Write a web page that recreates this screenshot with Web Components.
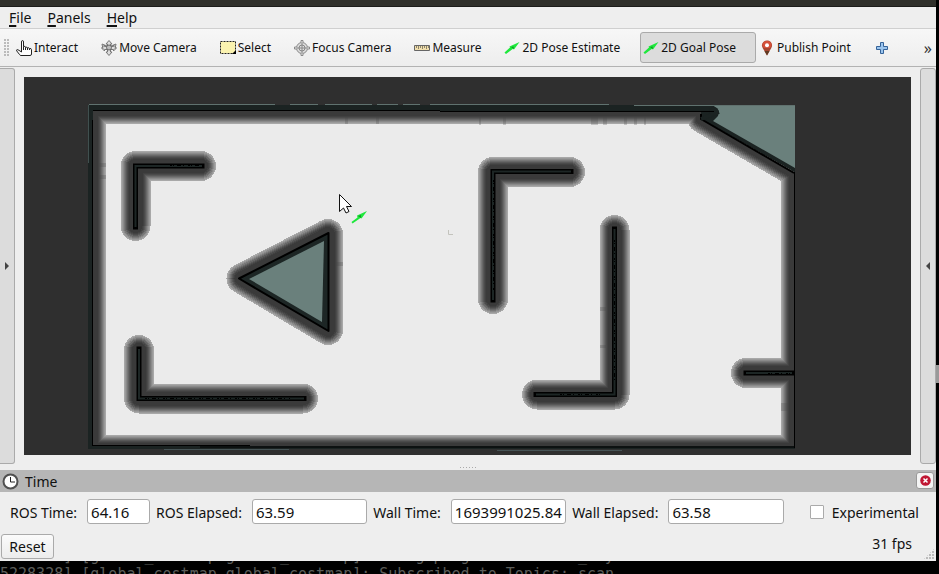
<!DOCTYPE html>
<html lang="en">
<head>
<meta charset="utf-8">
<title>RViz</title>
<style>
html, body { margin: 0; height: 100%; background: #000; overflow: hidden; }
</style>
</head>
<body>
<rviz-app></rviz-app>
<script>
const define = (name, html, setup) => customElements.define(name, class extends HTMLElement {
  constructor() {
    super();
    const t = document.createElement('template');
    t.innerHTML = html;
    this.attachShadow({ mode: 'open' }).append(t.content.cloneNode(true));
  }
  connectedCallback() { if (setup && !this.ready) { this.ready = true; setup.call(this, this.shadowRoot); } }
});

const icons = {
  hand: '<path d="M5.500 10V2q0-1.500 1-1.500t1 1.500v4.500q1.800-.8 2 .8 1.800-.6 2 .6 1.800-.5 2 .6 2-.3 2 1.200v4.300q0 1.500-1.500 1.500H5q-1 0-1.500-1L.8 11q-.6-1.500.7-1.500L4 11l1.500 1z" fill="#fff" stroke="#222"/><path d="M7.500 6.500V10M9.500 7.300V10M11.500 8v2M13.500 8.500V10" stroke="#222"/>',
  move: '<path d="M8 .5 11 4H9.500v2.500h3V5L15.500 8l-3 3V9.500h-3V12H11L8 15.500 5 12h1.500V9.500h-3V11L.5 8l3-3v1.500h3V4H5z" fill="#ddd" stroke="#777"/><path d="m1 4 5 2M15 4l-5 2M1 4l1 5M15 4l-1 5" stroke="#777" fill="none"/><circle cx="8" cy="7.500" r="2.500" fill="#bbb" stroke="#666"/>',
  select: '<path d="M.5 1.500h15v12H.5z" fill="#fbf3b0" stroke="#222" stroke-dasharray="2 1"/><path d="M16 10v4h-4z"/>',
  focus: '<g fill="none" stroke="#888"><circle cx="8" cy="8" r="5.500" fill="#ddd"/><circle cx="8" cy="8" r="3"/><path d="M8 3v10M3 8h10"/><path d="M7 2.500V.5h2v2M7 13.500v2h2v-2M2.500 7h-2v2h2M13.500 7h2v2h-2" fill="#eee"/></g>',
  measure: '<path d="M.5 5.500h15v5H.5z" fill="#f1dfad" stroke="#666"/><path d="M2.500 6v2M4.500 6v3M6.500 6v2M8.500 6v3M10.500 6v2M12.500 6v3M14.500 6v2" stroke="#8b836b"/>',
  arrow: '<path d="M.5 12.500 6 7.500 5.500 6.500 15.500 2 10 9.500 9 8.700 2 14z" fill="#1ee83c"/><path d="m7 7 2.500-.5L10 9.300z" fill="#0c9e22"/>',
  pin: '<path d="M8 15.500 3.700 8C1.500 4 4.500.5 8 .5S14.500 4 12.300 8z" fill="#a64530"/><path d="M3.500 6C3 3 5 1 8 1s5 2 4.500 5L11 8H5z" fill="#d4503a"/><path d="M5.500 11 8 15.500 10.500 11z" fill="#5f3a22"/><circle cx="8" cy="5.200" r="2" fill="#fff"/>',
  plus: '<path d="M6.500 2.500h3v4h4v3h-4v4h-3v-4h-4v-3h4z" fill="#9bc5ee" stroke="#356399" stroke-linejoin="round"/>'
};

define('tool-button', `<style>
  :host { display: block; flex: none; }
  button { display: flex; align-items: center; gap: 2px; width: 100%; height: 31px; padding: 1px 19px 0 2px; border: 1px solid transparent; border-radius: 3px; background: none; font: inherit; color: inherit; white-space: nowrap; }
  :host([active]) button { background: #dcdcdc; border-color: #aaa; }
  svg { width: 16px; height: 16px; flex: none; }
  </style><button type="button"><svg viewBox="0 0 16 16"></svg><slot></slot></button>`,
  function (r) {
    r.querySelector('svg').innerHTML = icons[this.getAttribute('icon')];
    const b = r.querySelector('button');
    b.setAttribute('aria-pressed', this.hasAttribute('active'));
    if (this.title) b.setAttribute('aria-label', this.title);
  });

define('menu-item', `<style>
  :host { display: block; }
  button { font: inherit; color: inherit; border: 0; background: none; padding: 0; display: block; }
  ::slotted(u) { text-decoration-thickness: 2px; text-underline-offset: 2px; }
  </style><button type="button"><slot></slot></button>`);

define('menu-bar', `<style>
  :host { display: flex; align-items: center; gap: 16px; height: 21px; padding-left: 9px; border-bottom: 1px solid #cfcfcf; font-size: 14px; line-height: 20px; }
  </style><slot></slot>`);

define('tool-bar', `<style>
  :host { display: flex; align-items: center; height: 37px; padding: 0 4px; background: linear-gradient(#f7f7f7, #ededed); border-bottom: 1px solid #b2b2b2; font-size: 12px; }
  .grip { width: 5px; height: 17px; margin-right: 4px; background: radial-gradient(circle at 1px 1px, #bbb 1px, transparent 1px) 0 0 / 3px 3px; }
  .more { margin-left: auto; border: 0; background: none; padding: 0; font: inherit; color: #333; font-size: 16px; line-height: 20px; }
  </style><span class="grip"></span><slot></slot><button class="more" type="button" aria-label="More tools">»</button>`);

define('dock-handle', `<style>
  :host { display: flex; flex: none; }
  button { width: 15px; padding: 0; border: 1px solid #aaa; border-radius: 0 3px 3px 0; border-left: 0; background: #dcdcdc; display: grid; place-items: center; }
  :host([side=right]) button { width: 16px; border: 1px solid #aaa; border-radius: 3px; }
  :host([side=right]) svg { transform: scaleX(-1); }
  svg { width: 4px; height: 8px; }
  </style><button type="button" aria-label="Toggle dock"><svg viewBox="0 0 4 8"><path d="M0 0 4 4 0 8z" fill="#444"/></svg></button>`);

define('map-view', `<style>
  :host { display: block; flex: 1; min-width: 0; background: #2f2f2f; }
  svg { display: block; width: 100%; height: 100%; }
  </style><svg viewBox="24 77 887 378" role="img" aria-label="Costmap">
  <defs>
    <clipPath id="room"><path d="M93 111H701V119L794 172V446H93z"/></clipPath>
  </defs>
  <path d="M88 105H795V449H88z" fill="#1b2322"/>
  <path d="M708 106H795V168L713 121 718 116 719 111 714 106z" fill="#6a807c"/>
  <g clip-path="url(#room)">
    <path d="M93 111H795V446H93z" fill="#ebebeb"/>
    <g id="halo" fill="none" stroke-linejoin="round" stroke-linecap="round" shape-rendering="crispEdges"></g>
  </g>
  <g fill="none" stroke="#000">
    <path d="M92.500 120V446" stroke-width="1"/>
    <path d="M93 110.500H440M440 111.500H714" stroke-width="1"/>
    <path d="M701 114v5l93 54" stroke-width="2"/>
    <path d="M794.500 172V448" stroke-width="1"/>
    <path d="M92 445.500H250M200 447H795" stroke-width="1"/>
  </g>
  <path d="M89 104.500H275M290 104.500H318M325 104.500H372M377 104.500H398M403 104.500H420M430 104.500H609M634 105.500H795" stroke="#60726f"/>
  <path d="M88.500 105V163" stroke="#40504f"/><path d="M164 449.500H289M497 450.500H622" stroke="#465355"/>
  <path d="M701 119 719 112" stroke="#1b2322" stroke-width="4"/>
  <circle cx="714" cy="111.500" r="4.500" fill="#1b2322"/>
  <path d="M690 111.500H714" stroke="#000"/>
  <g fill="none" stroke-linejoin="miter">
    <g stroke="#000" stroke-width="5" stroke-linecap="square">
      <path d="M135.500 227V166H202M493 300V171.500H571M614.500 229V394.500H536M139 349V398.500H304M746 373H792"/>
    </g>
    <path d="M135.500 227V166H202M493 300V171.500H571M614.500 229V394.500H536M139 349V398.500H304M746 373H792" stroke="#1d2625" stroke-width="2"/>
    <g stroke="#000" stroke-dasharray="2 1 1 3 4 2 1 4">
      <path d="M170 165.500H200M493.500 180V290M614.500 240V380M560 394.500H600M145 398.500H290M768 373.500H792"/>
    </g>
  </g>
  <path d="M239 278.500 328.500 233V331z" fill="#1d2625" stroke="#000" stroke-width="2" stroke-linejoin="round"/>
  <path d="m249 279 75-38-2 81z" fill="#6a807c"/>
  <path d="M328.500 236V328" stroke="#000" stroke-dasharray="2 1 3 1"/>
  <g fill="#444" opacity=".25"><path d="M99 163h7v4h-7zM99 175h7v4h-7zM345 117h3v7h-3zM376 117h3v7h-3zM479 116h2v9h-2zM503 116h3v9h-3zM591 116h7v9h-7zM603 117h4v8h-4zM624 117h3v8h-3zM634 117h3v8h-3zM644 117h2v8h-2zM781 403h7v8h-7zM336 262h7v4h-7zM600 307h6v4h-6zM600 345h6v3h-6z"/></g>
  <path d="M448.500 230v4.500h4.500" stroke="#c3c3bd" fill="none"/>
  <path d="m351.500 222 6-4.500-.5-2 10-4.500-5.500 7.500-1-.5-8 5.500z" fill="#1ee83c"/><path d="m358 216 3-1v3z" fill="#0c9e22"/>
  <path d="M339.500 194.500V211.500L343.500 208 346 213 349 211.500 346.500 206.500H351.500z" fill="#fff" stroke="#111"/>
  </svg>`,
  function (r) {
    const obstacles = 'M135.500 226V166H201M493 299V172H570M614.500 230V394.500H537M139 350V398.500H303M746 373H794M241.500 278.500 328 234V330z';
    const walls = 'M92 110.500H701V119L794 173V448H92z';
    const shades = ['#a8a8a8', '#9a9a9a', '#8a8a8a', '#787878', '#686868', '#585858', '#4b4b4b', '#414141', '#3a3a3a'];
    r.getElementById('halo').innerHTML = shades.map((c, i) =>
      `<path d="${obstacles}" stroke="${c}" stroke-width="${30 - i * 2}"/><path d="${walls}" stroke="${c}" stroke-width="${27 - i * 2}"/>`).join('');
  });

define('time-field', `<style>
  :host { display: flex; align-items: center; gap: 10px; flex: 1 1 auto; }
  :host([compact]) { flex: none; }
  :host([compact]) input { flex: none; width: 63px; }
  label { white-space: nowrap; padding-top: 2px; }
  input { flex: 1 1 80px; min-width: 0; width: 80px; height: 25px; box-sizing: border-box; border: 1px solid #aaa; border-radius: 3px; padding: 0 0 0 3px; background: #fff; font: inherit; font-size: 15px; color: #111; }
  </style><label for="v"><slot></slot></label><input id="v" type="text" readonly>`,
  function (r) { r.querySelector('input').value = this.getAttribute('value'); });

define('time-panel', `<style>
  :host { display: block; position: relative; }
  header { display: flex; align-items: center; height: 22px; padding: 0 2px; gap: 6px; background: #b6b6b6; }
  header svg { width: 17px; height: 17px; }
  h2 { margin: 0; padding-top: 2px; font: inherit; flex: 1; }
  .close { width: 18px; height: 17px; padding: 0; border: 1px solid #999; border-radius: 3px; background: #f4f4f4; display: grid; place-items: center; margin-bottom: 2px; }
  .close svg { width: 11px; height: 11px; }
  .fields { display: flex; align-items: center; gap: 6px; padding: 7px 17px 0 10px; height: 25px; }
  .check { display: flex; align-items: center; gap: 8px; padding-left: 20px; }
  .check label { padding-top: 2px; }
  .check input { appearance: none; width: 14px; height: 14px; margin: 0; border: 1px solid #aaa; border-radius: 1px; background: #fff; }
  footer { display: flex; justify-content: space-between; padding: 10px 24px 2px 1px; }
  .reset { width: 53px; height: 25px; padding: 1px 0 0; border: 1px solid #aaa; border-radius: 3px; background: linear-gradient(#fbfbfb, #ececec); font: inherit; color: inherit; }
  output { line-height: 20px; }
  .size { position: absolute; right: 1px; bottom: 1px; width: 12px; height: 12px; background: radial-gradient(circle at 1px 1px, #bbb 1px, transparent 1px) 0 0 / 3px 3px; clip-path: polygon(100% 0, 100% 100%, 0 100%); }
  </style>
  <header><svg viewBox="0 0 17 17"><circle cx="8.500" cy="8.500" r="7" fill="#fff" stroke="#505050" stroke-width="2"/><path d="M8.500 4v5H13" fill="none" stroke="#222"/></svg><h2>Time</h2>
  <button class="close" type="button" aria-label="Close panel"><svg viewBox="0 0 11 11"><circle cx="5.500" cy="5.500" r="5.300" fill="#c01733"/><path d="m3.500 3.500 4 4m0-4-4 4" stroke="#fff" stroke-width="1.500"/></svg></button></header>
  <div class="fields">
    <time-field compact value="64.16">ROS Time:</time-field>
    <time-field value="63.59">ROS Elapsed:</time-field>
    <time-field value="1693991025.84">Wall Time:</time-field>
    <time-field value="63.58">Wall Elapsed:</time-field>
    <span class="check"><input id="exp" type="checkbox"><label for="exp">Experimental</label></span>
  </div>
  <footer><button class="reset" type="button">Reset</button><output>31 fps</output></footer><span class="size"></span>`);

define('terminal-strip', `<style>
  :host { display: flex; flex-direction: column; justify-content: flex-end; flex: none; height: 13px; overflow: hidden; background: #000; color: #5c5d5a; font: 15px/18px "DejaVu Sans Mono", monospace; }
  div { white-space: pre; flex: none; margin-bottom: -9px; }
  </style><div><slot></slot></div>`);

define('rviz-app', `<style>
  :host { display: flex; flex-direction: column; height: 100vh; font: 14px/20px "Noto Sans", sans-serif; color: #111; }
  .desk { flex: 1; min-height: 0; display: flex; background: #000; }
  main { flex: 1; min-width: 0; display: flex; flex-direction: column; background: #eee; }
  .title { height: 6px; background: #30302b; border-bottom: 1px solid #1c1c1a; }
  .work { flex: 1; min-height: 0; display: flex; gap: 9px; padding-top: 1px; }
  map-view { margin: 9px 0; }
  .split { height: 6px; display: grid; place-items: center; }
  .split i { width: 17px; height: 1px; background: repeating-linear-gradient(90deg, #aaa 0 1px, transparent 1px 3px); }
  .edge { width: 3px; display: flex; flex-direction: column; }
  .edge::before { content: ""; flex: 365; } .edge::after { content: ""; flex: 178; }
  .edge i { flex: 18; background: #999; }
  </style>
  <div class="desk"><main>
    <div class="title"></div>
    <menu-bar><menu-item><u>F</u>ile</menu-item><menu-item><u>P</u>anels</menu-item><menu-item><u>H</u>elp</menu-item></menu-bar>
    <tool-bar>
      <tool-button icon="hand">Interact</tool-button><tool-button icon="move">Move Camera</tool-button><tool-button icon="select">Select</tool-button><tool-button icon="focus">Focus Camera</tool-button><tool-button icon="measure">Measure</tool-button><tool-button icon="arrow">2D Pose Estimate</tool-button><tool-button icon="arrow" active>2D Goal Pose</tool-button><tool-button icon="pin">Publish Point</tool-button><tool-button icon="plus" title="Add tool"></tool-button>
    </tool-bar>
    <div class="work"><dock-handle></dock-handle><map-view></map-view><dock-handle side="right"></dock-handle></div>
    <div class="split"><i></i></div>
    <time-panel></time-panel>
  </main><div class="edge"><i></i></div></div>
  <terminal-strip>5228328] [global_costmap.global_costmap]: Using plugin "obstacle_layer"
5228328] [global_costmap.global_costmap]: Subscribed to Topics: scan</terminal-strip>`);
</script>
</body>
</html>
